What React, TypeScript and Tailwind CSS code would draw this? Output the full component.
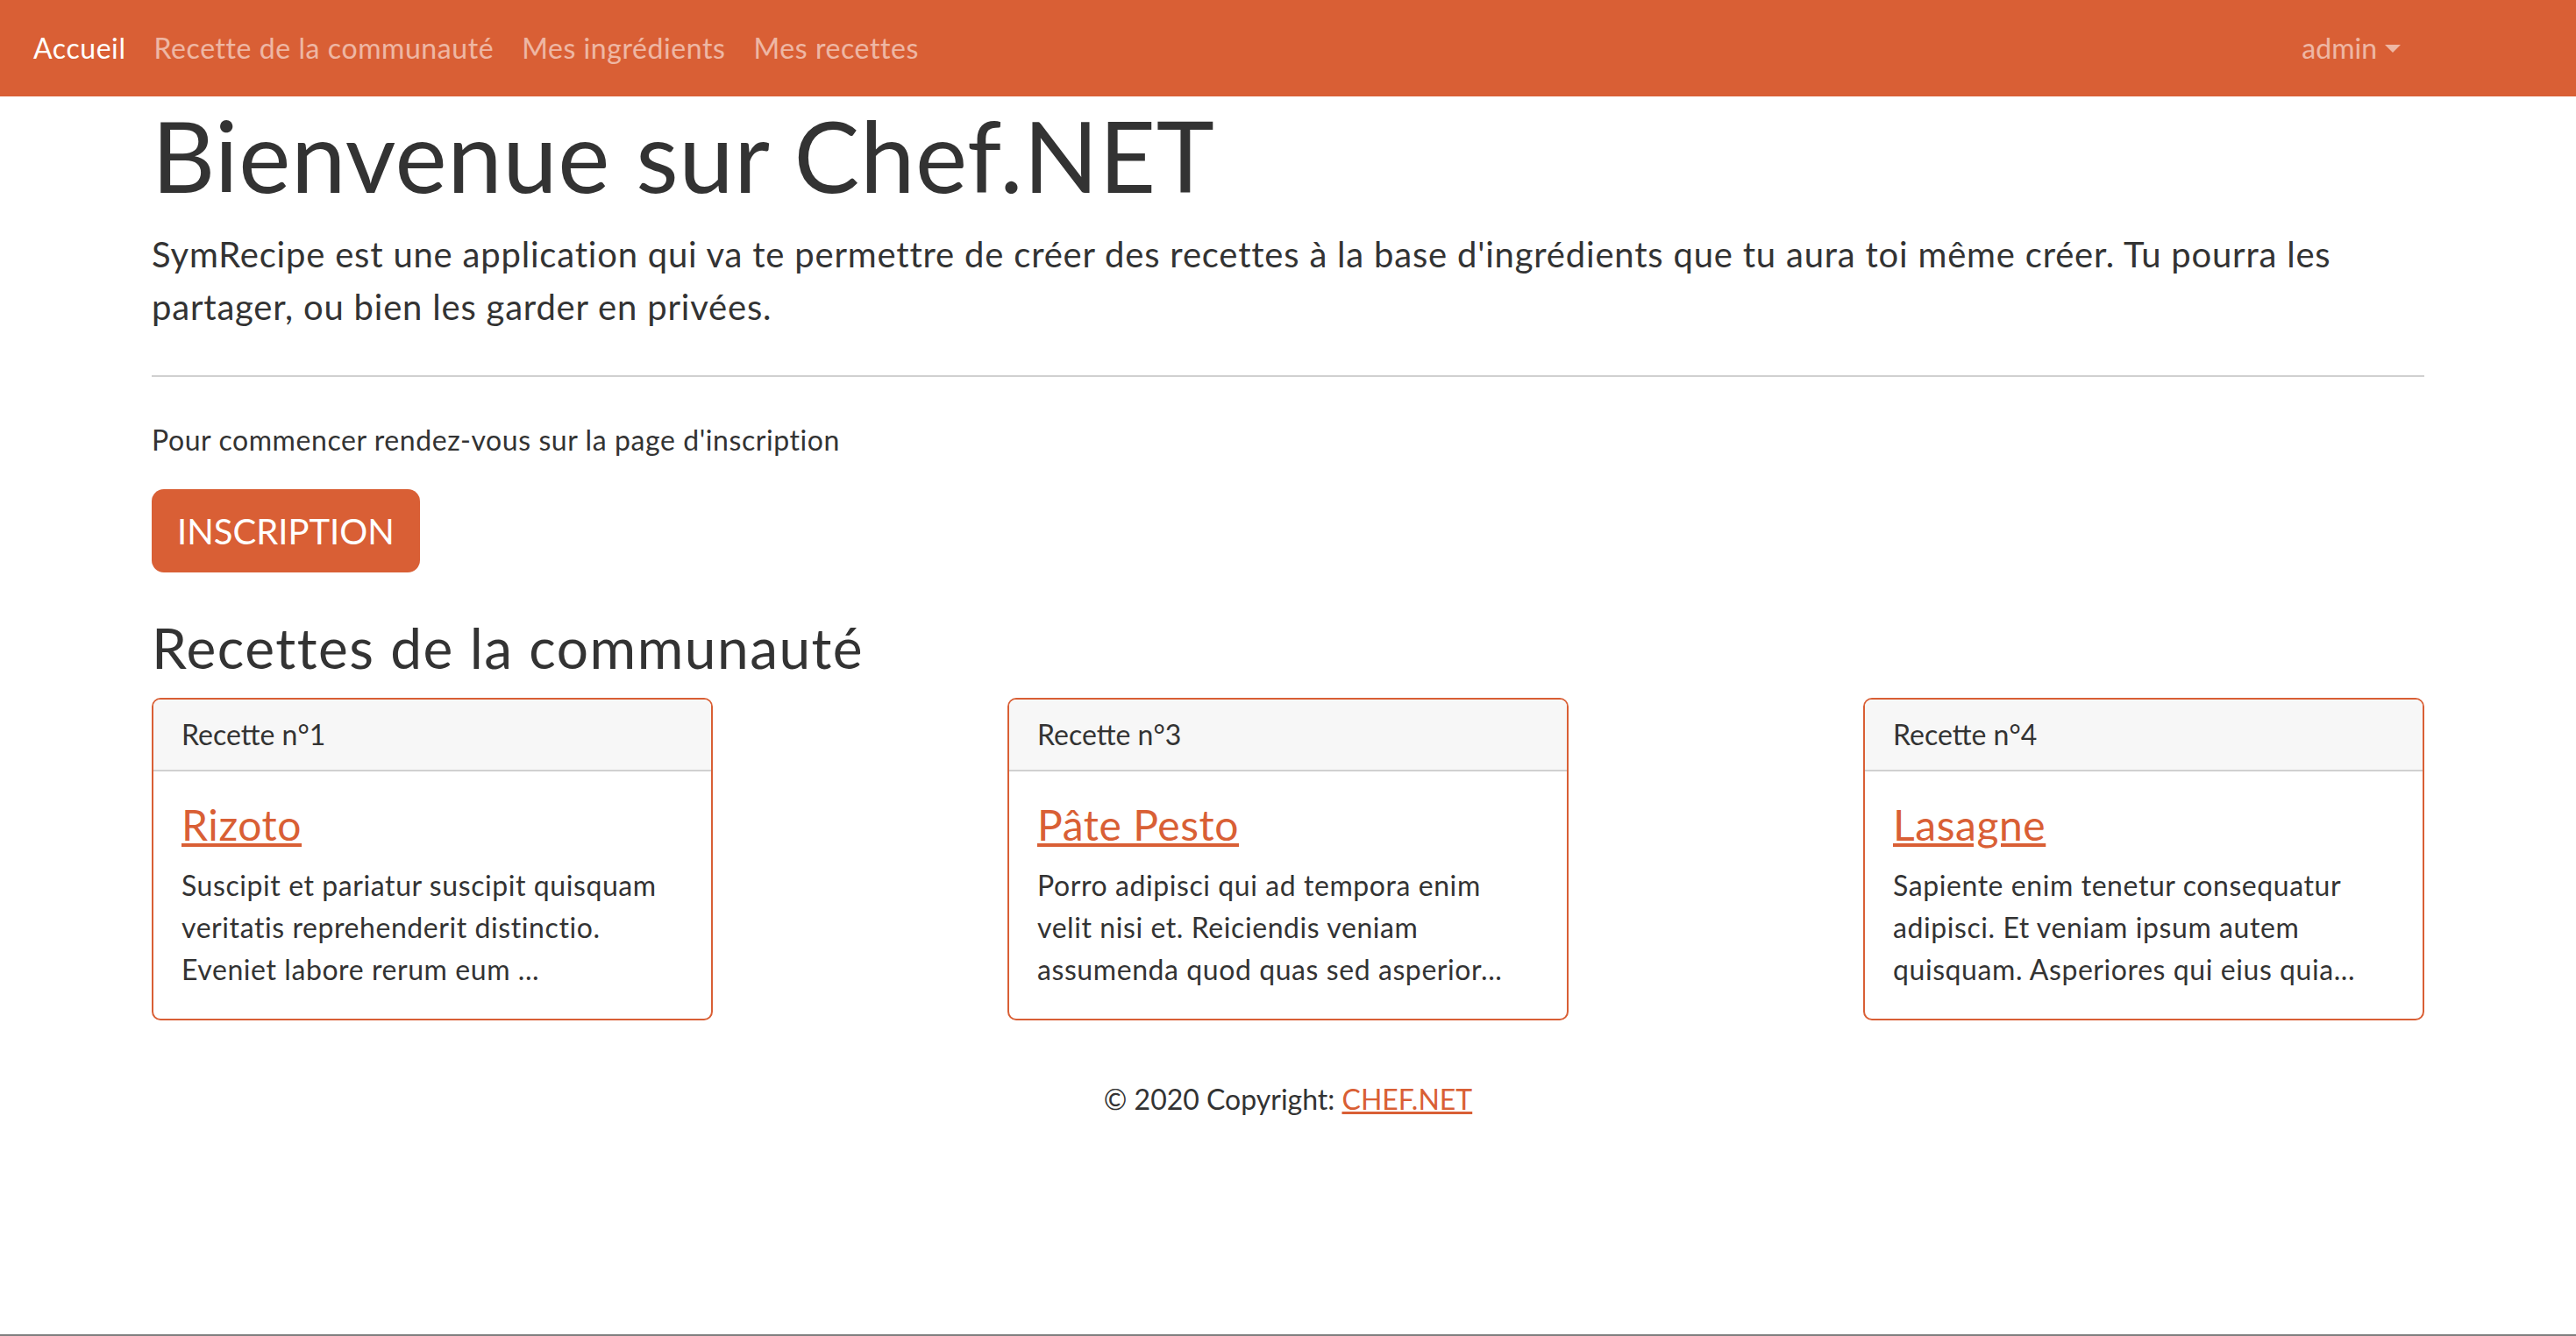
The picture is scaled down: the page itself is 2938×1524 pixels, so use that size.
import React from 'react';

const recipes = [
  {
    num: 1,
    name: 'Rizoto',
    lines: ['Suscipit et pariatur suscipit quisquam', 'veritatis reprehenderit distinctio.', 'Eveniet labore rerum eum ...'],
  },
  {
    num: 3,
    name: 'Pâte Pesto',
    lines: ['Porro adipisci qui ad tempora enim', 'velit nisi et. Reiciendis veniam', 'assumenda quod quas sed asperior...'],
  },
  {
    num: 4,
    name: 'Lasagne',
    lines: ['Sapiente enim tenetur consequatur', 'adipisci. Et veniam ipsum autem', 'quisquam. Asperiores qui eius quia...'],
  },
];

const App: React.FC = () => {
  return (
    <div className="h-[1524px] flex flex-col bg-white text-[#333] text-[32px] leading-[48px] tracking-[0.018em] font-[Lato,sans-serif]">
      <nav className="h-[110px] shrink-0 bg-[#d95f35] flex items-center pl-[22px] pr-[184px]">
        <a href="#" className="px-4 text-white">Accueil</a>
        <a href="#" className="px-4 text-white/55">Recette de la communauté</a>
        <a href="#" className="px-4 text-white/55">Mes ingrédients</a>
        <a href="#" className="px-4 text-white/55">Mes recettes</a>
        <a href="#" className="ml-auto px-4 text-white/55 flex items-center tracking-normal">
          admin
          <span className="ml-[9px] w-0 h-0 border-t-[9px] border-t-current border-x-[9px] border-x-transparent" />
        </a>
      </nav>

      <main className="w-[2592px] mx-auto">
        <h1 className="text-[112px] leading-[134px] mb-4 tracking-[0.005em]">Bienvenue sur Chef.NET</h1>
        <p className="text-[40px] leading-[60px] tracking-[0.02em]">
          SymRecipe est une application qui va te permettre de créer des recettes à la base d'ingrédients que tu aura toi même créer. Tu pourra les
          <br />
          partager, ou bien les garder en privées.
        </p>
        <hr className="my-12 border-t-2 border-[#d0d0d0]" />
        <p className="mb-8">Pour commencer rendez-vous sur la page d'inscription</p>
        <a
          href="#"
          className="inline-flex items-center h-[95px] px-[29px] rounded-[14px] bg-[#d95f35] text-white text-[40px] uppercase tracking-normal"
        >
          Inscription
        </a>

        <h2 className="mt-[47px] mb-[19px] text-[64px] leading-[77px] tracking-[0.023em]">Recettes de la communauté</h2>
        <div className="flex justify-between">
          {recipes.map((r) => (
            <div key={r.num} className="w-[640px] border-2 border-[#d95f35] rounded-[10px] overflow-hidden">
              <div className="bg-[#f7f7f7] px-8 py-4 border-b-2 border-[#d0d0d0] tracking-normal">Recette n°{r.num}</div>
              <div className="p-8">
                <h4 className="text-[48px] leading-[58px] mb-4">
                  <a href="#" className="text-[#d95f35] underline">{r.name}</a>
                </h4>
                <p>
                  {r.lines[0]}
                  <br />
                  {r.lines[1]}
                  <br />
                  {r.lines[2]}
                </p>
              </div>
            </div>
          ))}
        </div>
      </main>

      <footer className="mt-[34px] p-8 text-center tracking-normal">
        © 2020 Copyright: <a href="#" className="text-[#d95f35] underline">CHEF.NET</a>
      </footer>

      <div className="mt-auto h-[2px] bg-[#7f7f7f]" />
    </div>
  );
};

export default App;
